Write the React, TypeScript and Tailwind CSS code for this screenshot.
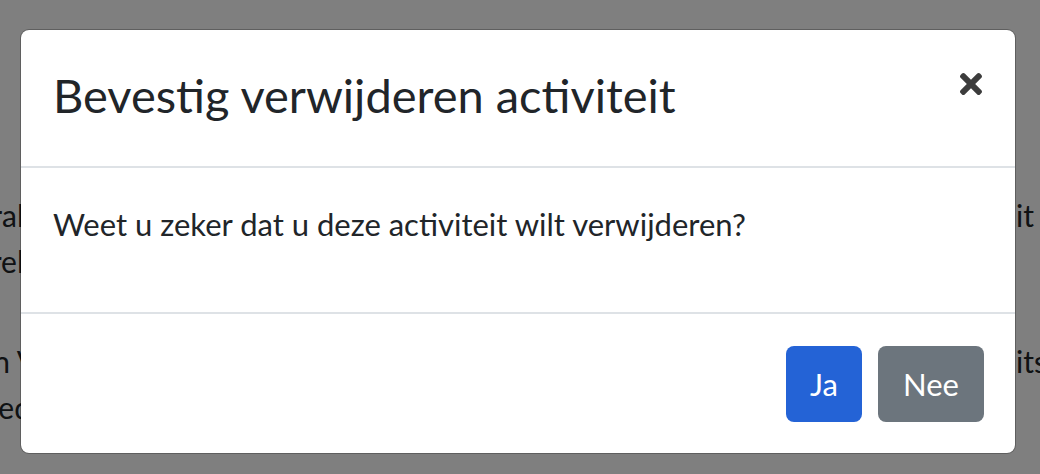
import { FaTimes } from "react-icons/fa";

type BgLine = {
  left: string;
  leftWidth: string;
  right?: string;
  gapBefore?: boolean;
};

// Page text that peeks out left and right of the dialog.
const BG_LINES: BgLine[] = [
  { left: "aanvral", leftWidth: "w-[24px]", right: "it" },
  { left: "gevrel", leftWidth: "w-[24px]" },
  { left: "een V", leftWidth: "w-[37px]", right: "its", gapBefore: true },
  { left: "beleed", leftWidth: "w-[31px]" },
];

export default function App() {
  return (
    <div className="relative h-[474px] w-[1040px] overflow-hidden bg-white font-['Lato',sans-serif] text-[#212529]">
      <div className="pt-[192px]">
        {BG_LINES.map((l) => (
          <div
            key={l.left}
            className={`flex h-[46px] items-center justify-between text-[30px] leading-[46px] ${l.gapBefore ? "mt-[54px]" : ""}`}
          >
            <div className={`flex ${l.leftWidth} justify-end overflow-hidden whitespace-nowrap`}>{l.left}</div>
            <div className="w-[24px] overflow-hidden whitespace-nowrap">{l.right}</div>
          </div>
        ))}
      </div>

      <div className="absolute inset-0 bg-black/50" />

      <div className="absolute inset-0 pl-[20px] pt-[29px]">
        <div className="w-[996px] rounded-[9px] border border-black/25 bg-white bg-clip-padding">
          <div className="flex items-start justify-between border-b-2 border-[#dee2e6] pl-[32px] pr-[28px] pt-[30px] pb-[36px]">
            <h4 className="text-[47px] leading-[70px] font-normal">Bevestig verwijderen activiteit</h4>
            <button className="mt-[8px] text-[#3c3c3c]" aria-label="Sluiten">
              <FaTimes size={32} />
            </button>
          </div>

          <div className="pl-[32px] pt-[33px] pb-[65px]">
            <p className="text-[31px] leading-[46px]">Weet u zeker dat u deze activiteit wilt verwijderen?</p>
          </div>

          <div className="flex justify-end gap-[16px] border-t-2 border-[#dee2e6] pr-[31px] pt-[32px] pb-[31px]">
            <button className="h-[76px] w-[76px] rounded-[8px] bg-[#2463d6] text-[31px] text-white">Ja</button>
            <button className="h-[76px] w-[106px] rounded-[8px] bg-[#6c757d] text-[31px] text-white">Nee</button>
          </div>
        </div>
      </div>
    </div>
  );
}
